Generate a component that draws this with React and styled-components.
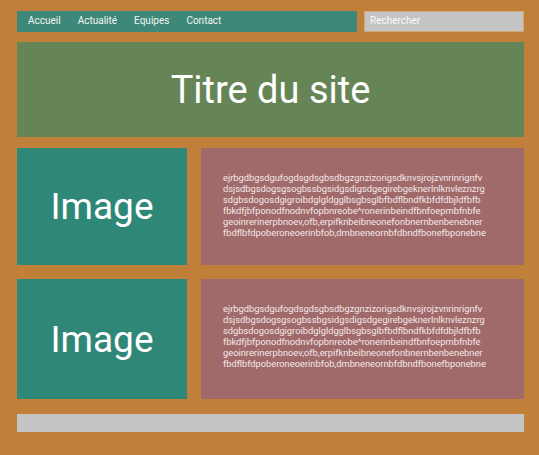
import styled, { createGlobalStyle } from 'styled-components';

const GlobalStyle = createGlobalStyle`
  html, body {
    margin: 0;
    padding: 0;
    background: #c1803a;
    font-family: Roboto, 'Liberation Sans', sans-serif;
  }
`;

const Page = styled.div`
  width: 507px;
  padding: 11px 15px 23px 17px;
  display: flex;
  flex-direction: column;
`;

const TopBar = styled.div`
  display: flex;
  gap: 7px;
  height: 21px;
`;

const Nav = styled.nav`
  width: 340px;
  background: #3d8878;
  display: flex;
  align-items: center;
  gap: 17px;
  padding-left: 11px;
  box-sizing: border-box;
`;

const NavLink = styled.a`
  color: #f4f4f4;
  font-size: 10px;
  text-decoration: none;
  line-height: 1;
  margin-top: -2px;
`;

const Search = styled.input`
  width: 160px;
  height: 21px;
  box-sizing: border-box;
  background: #c4c4c4;
  border: 1px solid #d2a77a;
  padding: 0 5px 2px;
  font-family: Roboto, 'Liberation Sans', sans-serif;
  font-size: 10px;
  color: #fff;
  outline: none;

  &::placeholder {
    color: #fafafa;
  }
`;

const Header = styled.header`
  margin-top: 10px;
  height: 95px;
  background: #668556;
  display: flex;
  align-items: center;
  justify-content: center;
`;

const Title = styled.h1`
  margin: 0;
  font-weight: 400;
  font-size: 38px;
  color: #fff;
`;

const Row = styled.section`
  display: flex;
  gap: 14px;
  height: ${({ h }) => h}px;
  margin-top: ${({ top }) => top}px;
`;

const ImageBox = styled.div`
  width: 170px;
  background: #2f8777;
  display: flex;
  align-items: center;
  justify-content: center;
  color: #fff;
  font-size: 37px;
`;

const TextBox = styled.div`
  flex: 1;
  background: #a06a6a;
  padding: 24px 22px 0;
  color: #f4e8e8;
  font-size: 9.3px;
  line-height: 11px;
`;

const Line = styled.div`
  white-space: nowrap;
`;

const Footer = styled.footer`
  margin-top: 15px;
  height: 18px;
  background: #c4c4c4;
`;

const lines = [
  'ejrbgdbgsdgufogdsgdsgbsdbgzgnzizorigsdknvsjrojzvnrinrignfv',
  'dsjsdbgsdogsgsogbssbgsidgsdigsdgegirebgeknerlnlknvleznzrg',
  'sdgbsdogosdgigroibdglgldgglbsgbsglbfbdflbndfkbfdfdbjldfbfb',
  'fbkdfjbfponodfnodnvfopbnreobe^ronerinbeindfbnfoepmbfnbfe',
  'geoinrerinerpbnoev,ofb,erpifknbeibneonefonbnernbenbenebner',
  'fbdflbfdpoberoneoerinbfob,dmbneneornbfdbndfbonefbponebne',
];

const rows = [
  { id: 'a', h: 117, top: 11 },
  { id: 'b', h: 120, top: 14 },
];

function App() {
  return (
    <>
      <GlobalStyle />
      <Page>
        <TopBar>
          <Nav>
            <NavLink href="#">Accueil</NavLink>
            <NavLink href="#">Actualité</NavLink>
            <NavLink href="#">Equipes</NavLink>
            <NavLink href="#">Contact</NavLink>
          </Nav>
          <Search placeholder="Rechercher" />
        </TopBar>
        <Header>
          <Title>Titre du site</Title>
        </Header>
        {rows.map((row) => (
          <Row key={row.id} h={row.h} top={row.top}>
            <ImageBox>Image</ImageBox>
            <TextBox>
              {lines.map((l) => <Line key={l}>{l}</Line>)}
            </TextBox>
          </Row>
        ))}
        <Footer />
      </Page>
    </>
  );
}

export default App;
